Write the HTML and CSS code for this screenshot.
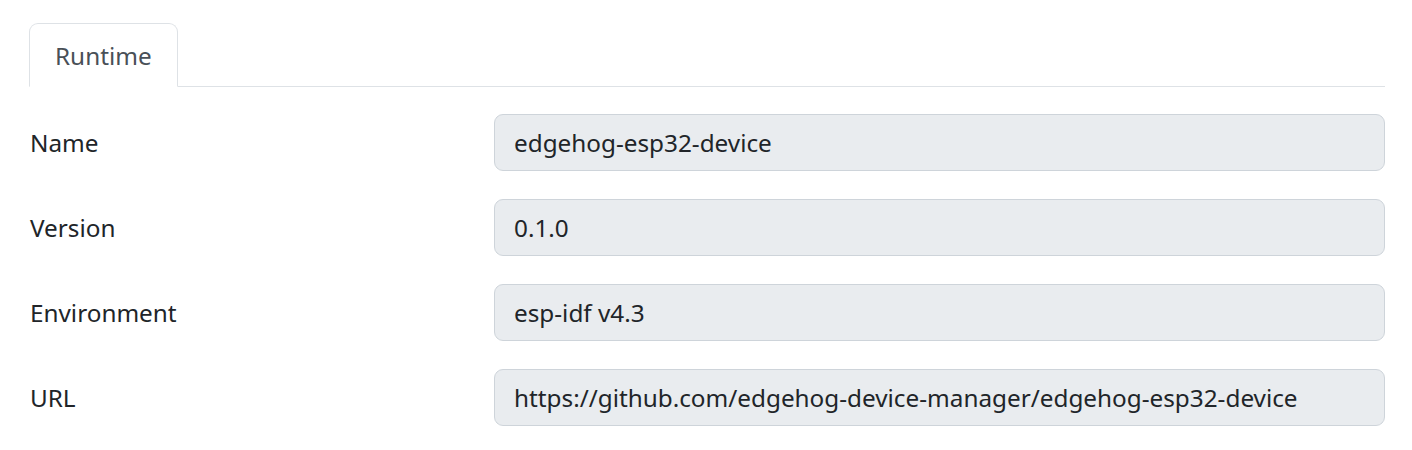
FILE: index.html
```html
<!DOCTYPE html>
<html>
<head>
<meta charset="utf-8">
<link rel="stylesheet" href="styles.css">
</head>
<body>
<div class="page">
  <ul class="tabs">
    <li class="tab active">Runtime</li>
  </ul>
  <div class="form">
    <div class="row">
      <label class="label">Name</label>
      <div class="field">edgehog-esp32-device</div>
    </div>
    <div class="row">
      <label class="label">Version</label>
      <div class="field">0.1.0</div>
    </div>
    <div class="row">
      <label class="label">Environment</label>
      <div class="field">esp-idf v4.3</div>
    </div>
    <div class="row">
      <label class="label">URL</label>
      <div class="field">https://github.com/edgehog-device-manager/edgehog-esp32-device</div>
    </div>
  </div>
</div>
</body>
</html>
```

FILE: styles.css
```css
* { box-sizing: border-box; }
html, body { margin: 0; padding: 0; background: #fff; }
body {
  font-family: "Noto Sans", "Open Sans", sans-serif;
  font-size: 24.3px;
  color: #212529;
}
.page {
  padding: 23px 27px 0 29px;
}
.tabs {
  list-style: none;
  margin: 0;
  padding: 0;
  display: flex;
  border-bottom: 1px solid #dee2e6;
}
.tab {
  margin-bottom: -1px;
  padding: 0 25px 0 25px;
  height: 64px;
  display: flex;
  align-items: center;
  color: #495057;
  background: #fff;
  border: 1px solid #dee2e6;
  border-bottom-color: #fff;
  border-radius: 9px 9px 0 0;
}
.form {
  padding-top: 27px;
  display: flex;
  flex-direction: column;
  gap: 28px;
}
.row {
  display: grid;
  grid-template-columns: 429px 1fr;
  column-gap: 36px;
  align-items: center;
}
.label {
  line-height: 36px;
  padding-left: 1px;
}
.field {
  height: 57px;
  display: flex;
  align-items: center;
  padding: 0 19px;
  background: #e9ecef;
  border: 1px solid #ced4da;
  border-radius: 9px;
  white-space: nowrap;
}
```
